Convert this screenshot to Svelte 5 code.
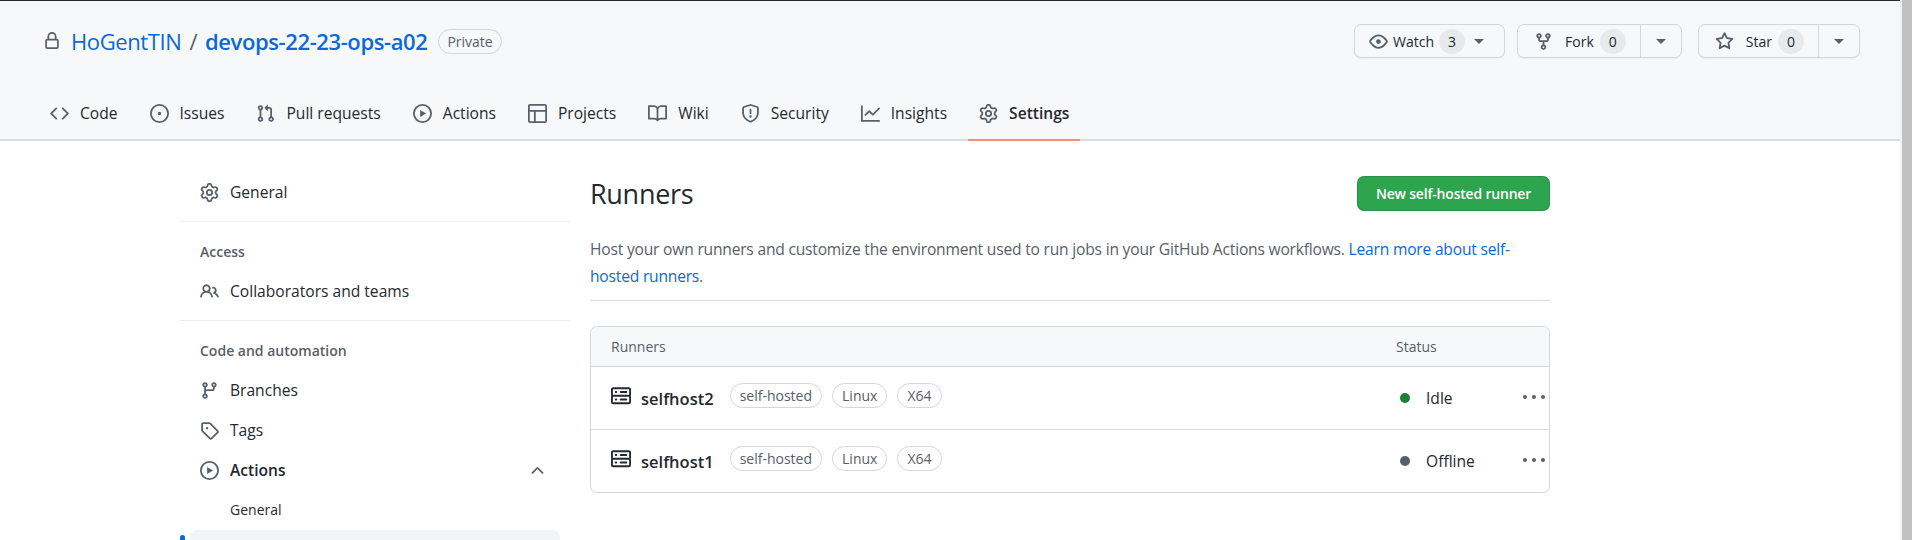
<script>
	const P = {
		lock: 'M4 4a4 4 0 0 1 8 0v2h.25c.966 0 1.75.784 1.75 1.75v5.5A1.75 1.75 0 0 1 12.25 15h-8.5A1.75 1.75 0 0 1 2 13.25v-5.5C2 6.784 2.784 6 3.75 6H4Zm8.25 3.5h-8.5a.25.25 0 0 0-.25.25v5.5c0 .138.112.25.25.25h8.5a.25.25 0 0 0 .25-.25v-5.5a.25.25 0 0 0-.25-.25ZM10.5 6V4a2.5 2.5 0 1 0-5 0v2Z',
		code: 'm11.28 3.22 4.25 4.25a.75.75 0 0 1 0 1.06l-4.25 4.25a.749.749 0 0 1-1.275-.326.749.749 0 0 1 .215-.734L13.94 8l-3.72-3.72a.749.749 0 0 1 .326-1.275.749.749 0 0 1 .734.215Zm-6.56 0a.751.751 0 0 1 1.042.018.751.751 0 0 1 .018 1.042L2.06 8l3.72 3.72a.749.749 0 0 1-.326 1.275.749.749 0 0 1-.734-.215L.47 8.53a.75.75 0 0 1 0-1.06Z',
		issue: 'M8 9.5a1.5 1.5 0 1 0 0-3 1.5 1.5 0 0 0 0 3ZM8 0a8 8 0 1 1 0 16A8 8 0 0 1 8 0ZM1.5 8a6.5 6.5 0 1 0 13 0 6.5 6.5 0 0 0-13 0Z',
		pull: 'M1.5 3.25a2.25 2.25 0 1 1 3 2.122v5.256a2.251 2.251 0 1 1-1.5 0V5.372A2.25 2.25 0 0 1 1.5 3.25Zm5.677-.177L9.573.677A.25.25 0 0 1 10 .854V2.5h1A2.5 2.5 0 0 1 13.5 5v5.628a2.251 2.251 0 1 1-1.5 0V5a1 1 0 0 0-1-1h-1v1.646a.25.25 0 0 1-.427.177L7.177 3.427a.25.25 0 0 1 0-.354ZM3.75 2.5a.75.75 0 1 0 0 1.5.75.75 0 0 0 0-1.5Zm0 9.5a.75.75 0 1 0 0 1.5.75.75 0 0 0 0-1.5Zm8.25.75a.75.75 0 1 0 1.5 0 .75.75 0 0 0-1.5 0Z',
		play: 'M8 0a8 8 0 1 1 0 16A8 8 0 0 1 8 0ZM1.5 8a6.5 6.5 0 1 0 13 0 6.5 6.5 0 0 0-13 0Zm4.879-2.773 4.264 2.559a.25.25 0 0 1 0 .428l-4.264 2.559A.25.25 0 0 1 6 10.559V5.442a.25.25 0 0 1 .379-.215Z',
		table: 'M0 1.75C0 .784.784 0 1.75 0h12.5C15.216 0 16 .784 16 1.75v12.5A1.75 1.75 0 0 1 14.25 16H1.75A1.75 1.75 0 0 1 0 14.25ZM6.5 6.5v8h7.75a.25.25 0 0 0 .25-.25V6.5Zm8-1.5V1.75a.25.25 0 0 0-.25-.25H1.75a.25.25 0 0 0-.25.25V5Zm-13 1.5v7.75c0 .138.112.25.25.25H5v-8Z',
		book: 'M0 1.75A.75.75 0 0 1 .75 1h4.253c1.227 0 2.317.59 3 1.501A3.743 3.743 0 0 1 11.006 1h4.245a.75.75 0 0 1 .75.75v10.5a.75.75 0 0 1-.75.75h-4.507a2.25 2.25 0 0 0-1.591.659l-.622.621a.75.75 0 0 1-1.06 0l-.622-.621A2.25 2.25 0 0 0 5.258 13H.75a.75.75 0 0 1-.75-.75Zm7.251 10.324.004-5.073-.002-2.253A2.25 2.25 0 0 0 5.003 2.5H1.5v9h3.757a3.75 3.75 0 0 1 1.994.574ZM8.755 4.75l-.004 7.322a3.752 3.752 0 0 1 1.992-.572H14.5v-9h-3.495a2.25 2.25 0 0 0-2.25 2.25Z',
		shield: 'M7.467.133a1.748 1.748 0 0 1 1.066 0l5.25 1.68A1.75 1.75 0 0 1 15 3.48V7c0 1.566-.32 3.182-1.303 4.682-.983 1.498-2.585 2.813-5.032 3.855a1.697 1.697 0 0 1-1.33 0c-2.447-1.042-4.049-2.357-5.032-3.855C1.32 10.182 1 8.566 1 7V3.48a1.75 1.75 0 0 1 1.217-1.667Zm.61 1.429a.25.25 0 0 0-.153 0l-5.25 1.68a.25.25 0 0 0-.174.238V7c0 1.358.275 2.666 1.057 3.86.784 1.194 2.121 2.34 4.366 3.297a.196.196 0 0 0 .154 0c2.245-.956 3.582-2.104 4.366-3.298C13.225 9.666 13.5 8.36 13.5 7V3.48a.251.251 0 0 0-.174-.237l-5.25-1.68ZM8.75 4.75v3a.75.75 0 0 1-1.5 0v-3a.75.75 0 0 1 1.5 0ZM9 10.5a1 1 0 1 1-2 0 1 1 0 0 1 2 0Z',
		graph: 'M1.5 1.75V13.5h13.75a.75.75 0 0 1 0 1.5H.75a.75.75 0 0 1-.75-.75V1.75a.75.75 0 0 1 1.5 0Zm14.28 2.53-5.25 5.25a.75.75 0 0 1-1.06 0L7 7.06 4.28 9.78a.751.751 0 0 1-1.042-.018.751.751 0 0 1-.018-1.042l3.25-3.25a.75.75 0 0 1 1.06 0L10 7.94l4.72-4.72a.751.751 0 0 1 1.042.018.751.751 0 0 1 .018 1.042Z',
		gear: 'M8 0a8.2 8.2 0 0 1 .701.031C9.444.095 9.99.645 10.16 1.29l.288 1.107c.018.066.079.158.212.224.231.114.454.243.668.386.123.082.233.09.299.071l1.103-.303c.644-.176 1.392.021 1.82.63.27.385.506.792.704 1.218.315.675.111 1.422-.364 1.891l-.814.806c-.049.048-.098.147-.088.294.016.257.016.515 0 .772-.01.147.038.246.088.294l.814.806c.475.469.679 1.216.364 1.891a7.977 7.977 0 0 1-.704 1.217c-.428.61-1.176.807-1.82.63l-1.102-.302c-.067-.019-.177-.011-.3.071a5.909 5.909 0 0 1-.668.386c-.133.066-.194.158-.211.224l-.29 1.106c-.168.646-.715 1.196-1.458 1.26a8.006 8.006 0 0 1-1.402 0c-.743-.064-1.289-.614-1.458-1.26l-.289-1.106c-.018-.066-.079-.158-.212-.224a5.738 5.738 0 0 1-.668-.386c-.123-.082-.233-.09-.299-.071l-1.103.303c-.644.176-1.392-.021-1.82-.63a8.12 8.12 0 0 1-.704-1.218c-.315-.675-.111-1.422.363-1.891l.815-.806c.05-.048.098-.147.088-.294a6.214 6.214 0 0 1 0-.772c.01-.147-.038-.246-.088-.294l-.815-.806C.635 6.045.431 5.298.746 4.623a7.92 7.92 0 0 1 .704-1.217c.428-.61 1.176-.807 1.82-.63l1.102.302c.067.019.177.011.3-.071.214-.143.437-.272.668-.386.133-.066.194-.158.211-.224l.29-1.106C6.009.645 6.556.095 7.299.03 7.53.01 7.764 0 8 0Zm-.571 1.525c-.036.003-.108.036-.137.146l-.289 1.105c-.147.561-.549.967-.998 1.189-.173.086-.34.183-.5.29-.417.278-.97.423-1.529.27l-1.103-.303c-.109-.03-.175.016-.195.045-.22.312-.412.644-.573.99-.014.031-.021.11.059.19l.815.806c.411.406.562.957.53 1.456a4.709 4.709 0 0 0 0 .582c.032.499-.119 1.05-.53 1.456l-.815.806c-.081.08-.073.159-.059.19.162.346.353.677.573.989.02.03.085.076.195.046l1.102-.303c.56-.153 1.113-.008 1.53.27.161.107.328.204.501.29.447.222.85.629.997 1.189l.289 1.105c.029.109.101.143.137.146a6.6 6.6 0 0 0 1.142 0c.036-.003.108-.036.137-.146l.289-1.105c.147-.561.549-.967.998-1.189.173-.086.34-.183.5-.29.417-.278.97-.423 1.529-.27l1.103.303c.109.029.175-.016.195-.045.22-.313.411-.644.573-.99.014-.031.021-.11-.059-.19l-.815-.806c-.411-.406-.562-.957-.53-1.456a4.709 4.709 0 0 0 0-.582c-.032-.499.119-1.05.53-1.456l.815-.806c.081-.08.073-.159.059-.19a6.464 6.464 0 0 0-.573-.989c-.02-.03-.085-.076-.195-.046l-1.102.303c-.56.153-1.113.008-1.53-.27a4.44 4.44 0 0 0-.501-.29c-.447-.222-.85-.629-.997-1.189l-.289-1.105c-.029-.11-.101-.143-.137-.146a6.6 6.6 0 0 0-1.142 0ZM11 8a3 3 0 1 1-6 0 3 3 0 0 1 6 0ZM9.5 8a1.5 1.5 0 1 0-3.001.001A1.5 1.5 0 0 0 9.5 8Z',
		eye: 'M8 2c1.981 0 3.671.992 4.933 2.078 1.27 1.091 2.187 2.345 2.637 3.023a1.62 1.62 0 0 1 0 1.798c-.45.678-1.367 1.932-2.637 3.023C11.67 13.008 9.981 14 8 14c-1.981 0-3.671-.992-4.933-2.078C1.797 10.83.88 9.576.43 8.898a1.62 1.62 0 0 1 0-1.798c.45-.677 1.367-1.931 2.637-3.022C4.33 2.992 6.019 2 8 2ZM1.679 7.932a.12.12 0 0 0 0 .136c.411.622 1.241 1.75 2.366 2.717C5.176 11.758 6.527 12.5 8 12.5c1.473 0 2.825-.742 3.955-1.715 1.124-.967 1.954-2.096 2.366-2.717a.12.12 0 0 0 0-.136c-.412-.621-1.242-1.75-2.366-2.717C10.824 4.242 9.473 3.5 8 3.5c-1.473 0-2.825.742-3.955 1.715-1.124.967-1.954 2.096-2.366 2.717ZM8 10a2 2 0 1 1-.001-3.999A2 2 0 0 1 8 10Z',
		fork: 'M5 5.372v.878c0 .414.336.75.75.75h4.5a.75.75 0 0 0 .75-.75v-.878a2.25 2.25 0 1 1 1.5 0v.878a2.25 2.25 0 0 1-2.25 2.25h-1.5v2.128a2.251 2.251 0 1 1-1.5 0V8.5h-1.5A2.25 2.25 0 0 1 3.5 6.25v-.878a2.25 2.25 0 1 1 1.5 0ZM5 3.25a.75.75 0 1 0-1.5 0 .75.75 0 0 0 1.5 0Zm6.75.75a.75.75 0 1 0 0-1.5.75.75 0 0 0 0 1.5Zm-3 8.75a.75.75 0 1 0-1.5 0 .75.75 0 0 0 1.5 0Z',
		star: 'M8 .25a.75.75 0 0 1 .673.418l1.882 3.815 4.21.612a.75.75 0 0 1 .416 1.279l-3.046 2.97.719 4.192a.751.751 0 0 1-1.088.791L8 12.347l-3.766 1.98a.75.75 0 0 1-1.088-.79l.72-4.194L.818 6.374a.75.75 0 0 1 .416-1.28l4.21-.611L7.327.668A.75.75 0 0 1 8 .25Zm0 2.445L6.615 5.5a.75.75 0 0 1-.564.41l-3.097.45 2.24 2.184a.75.75 0 0 1 .216.664l-.528 3.084 2.769-1.456a.75.75 0 0 1 .698 0l2.77 1.456-.53-3.084a.75.75 0 0 1 .216-.664l2.24-2.183-3.096-.45a.75.75 0 0 1-.564-.41L8 2.694Z',
		people: 'M2 5.5a3.5 3.5 0 1 1 5.898 2.549 5.508 5.508 0 0 1 3.034 4.084.75.75 0 1 1-1.482.235 4 4 0 0 0-7.9 0 .75.75 0 0 1-1.482-.236A5.507 5.507 0 0 1 3.102 8.05 3.493 3.493 0 0 1 2 5.5ZM11 4a3.001 3.001 0 0 1 2.22 5.018 5.01 5.01 0 0 1 2.56 3.012.749.749 0 0 1-.885.954.752.752 0 0 1-.549-.514 3.507 3.507 0 0 0-2.522-2.372.75.75 0 0 1-.574-.73v-.352a.75.75 0 0 1 .416-.672A1.5 1.5 0 0 0 11 5.5.75.75 0 0 1 11 4Zm-5.5-.5a2 2 0 1 0-.001 3.999A2 2 0 0 0 5.5 3.5Z',
		branch: 'M9.5 3.25a2.25 2.25 0 1 1 3 2.122V6A2.5 2.5 0 0 1 10 8.5H6a1 1 0 0 0-1 1v1.128a2.251 2.251 0 1 1-1.5 0V5.372a2.25 2.25 0 1 1 1.5 0v1.836A2.493 2.493 0 0 1 6 7h4a1 1 0 0 0 1-1v-.628A2.25 2.25 0 0 1 9.5 3.25Zm-6 0a.75.75 0 1 0 1.5 0 .75.75 0 0 0-1.5 0Zm8.25-.75a.75.75 0 1 0 0 1.5.75.75 0 0 0 0-1.5ZM4.25 12a.75.75 0 1 0 0 1.5.75.75 0 0 0 0-1.5Z',
		tag: 'M1 7.775V2.75C1 1.784 1.784 1 2.75 1h5.025c.464 0 .91.184 1.238.513l6.25 6.25a1.75 1.75 0 0 1 0 2.474l-5.026 5.026a1.75 1.75 0 0 1-2.474 0l-6.25-6.25A1.752 1.752 0 0 1 1 7.775Zm1.5 0c0 .066.026.13.073.177l6.25 6.25a.25.25 0 0 0 .354 0l5.025-5.025a.25.25 0 0 0 0-.354l-6.25-6.25a.25.25 0 0 0-.177-.073H2.75a.25.25 0 0 0-.25.25ZM6 5a1 1 0 1 1 0 2 1 1 0 0 1 0-2Z',
		chevron: 'M3.22 10.53a.75.75 0 0 1 0-1.06l4.25-4.25a.75.75 0 0 1 1.06 0l4.25 4.25a.75.75 0 1 1-1.06 1.06L8 6.81l-3.72 3.72a.75.75 0 0 1-1.06 0Z',
		server: 'M1.75 1h12.5c.966 0 1.75.784 1.75 1.75v4c0 .372-.116.717-.314 1 .198.283.314.628.314 1v4a1.75 1.75 0 0 1-1.75 1.75H1.75A1.75 1.75 0 0 1 0 12.75v-4c0-.372.116-.717.314-1A1.739 1.739 0 0 1 0 6.75v-4C0 1.784.784 1 1.75 1ZM1.5 2.75v4c0 .138.112.25.25.25h12.5a.25.25 0 0 0 .25-.25v-4a.25.25 0 0 0-.25-.25H1.75a.25.25 0 0 0-.25.25Zm.25 5.75a.25.25 0 0 0-.25.25v4c0 .138.112.25.25.25h12.5a.25.25 0 0 0 .25-.25v-4a.25.25 0 0 0-.25-.25ZM7 4.75A.75.75 0 0 1 7.75 4h4.5a.75.75 0 0 1 0 1.5h-4.5A.75.75 0 0 1 7 4.75ZM7.75 10h4.5a.75.75 0 0 1 0 1.5h-4.5a.75.75 0 0 1 0-1.5ZM3 4.75A.75.75 0 0 1 3.75 4h.5a.75.75 0 0 1 0 1.5h-.5A.75.75 0 0 1 3 4.75ZM3.75 10h.5a.75.75 0 0 1 0 1.5h-.5a.75.75 0 0 1 0-1.5Z'
	};

	const tabs = [
		{ label: 'Code', icon: 'code' },
		{ label: 'Issues', icon: 'issue' },
		{ label: 'Pull requests', icon: 'pull' },
		{ label: 'Actions', icon: 'play' },
		{ label: 'Projects', icon: 'table' },
		{ label: 'Wiki', icon: 'book' },
		{ label: 'Security', icon: 'shield' },
		{ label: 'Insights', icon: 'graph' },
		{ label: 'Settings', icon: 'gear', active: true }
	];

	const runners = [
		{ name: 'selfhost2', status: 'Idle', color: '#1a7f37' },
		{ name: 'selfhost1', status: 'Offline', color: '#57606a' }
	];
	const labels = ['self-hosted', 'Linux', 'X64'];
</script>

<div class="page">
	<div class="content">
		<header class="repo-head">
			<div class="title-row">
				<h1 class="title">
					<svg class="icon lock" viewBox="0 0 16 16"><path d={P.lock} /></svg>
					<a href="#owner" class="owner">HoGentTIN</a>
					<span class="slash">/</span>
					<a href="#repo" class="repo">devops-22-23-ops-a02</a>
					<span class="private">Private</span>
				</h1>
				<div class="actions">
					<div class="btn watch">
						<svg class="icon" viewBox="0 0 16 16"><path d={P.eye} /></svg>
						<span>Watch</span>
						<span class="count">3</span>
						<span class="caret"></span>
					</div>
					<div class="btn split">
						<div class="btn-main">
							<svg class="icon" viewBox="0 0 16 16"><path d={P.fork} /></svg>
							<span class="btn-label">Fork</span>
							<span class="count">0</span>
						</div>
						<div class="btn-drop"><span class="caret"></span></div>
					</div>
					<div class="btn split star">
						<div class="btn-main">
							<svg class="icon" viewBox="0 0 16 16"><path d={P.star} /></svg>
							<span class="btn-label">Star</span>
							<span class="count">0</span>
						</div>
						<div class="btn-drop"><span class="caret"></span></div>
					</div>
				</div>
			</div>
			<nav class="tabs">
				{#each tabs as t}
					<a href="#tab" class="tab" class:active={t.active}>
						<svg class="icon" viewBox="0 0 16 16"><path d={P[t.icon]} /></svg>
						<span>{t.label}</span>
					</a>
				{/each}
			</nav>
		</header>

		<div class="layout">
			<aside class="side">
				<a href="#g" class="item"><svg class="icon" viewBox="0 0 16 16"><path d={P.gear} /></svg>General</a>
				<div class="sep"></div>
				<div class="heading">Access</div>
				<a href="#c" class="item"><svg class="icon" viewBox="0 0 16 16"><path d={P.people} /></svg>Collaborators and teams</a>
				<div class="sep"></div>
				<div class="heading">Code and automation</div>
				<a href="#b" class="item"><svg class="icon" viewBox="0 0 16 16"><path d={P.branch} /></svg>Branches</a>
				<a href="#t" class="item"><svg class="icon" viewBox="0 0 16 16"><path d={P.tag} /></svg>Tags</a>
				<a href="#a" class="item strong">
					<svg class="icon" viewBox="0 0 16 16"><path d={P.play} /></svg>Actions
					<svg class="icon chev" viewBox="0 0 16 16"><path d={P.chevron} /></svg>
				</a>
				<a href="#ag" class="sub">General</a>
				<div class="sub current"><span class="mark"></span></div>
			</aside>

			<main class="main">
				<div class="main-head">
					<h2>Runners</h2>
					<button class="primary">New self-hosted runner</button>
				</div>
				<p class="desc">
					Host your own runners and customize the environment used to run jobs in your GitHub Actions workflows. <a href="#l">Learn more about self-hosted runners</a>.
				</p>
				<div class="box">
					<div class="box-head">
						<span class="col-name">Runners</span>
						<span class="col-status">Status</span>
					</div>
					{#each runners as r}
						<div class="row">
							<div class="col-name runner">
								<svg class="icon server" viewBox="0 0 16 16"><path d={P.server} /></svg>
								<span class="name">{r.name}</span>
								<span class="pills">
									{#each labels as l}
										<span class="pill">{l}</span>
									{/each}
								</span>
							</div>
							<div class="col-status state">
								<span class="dot" style="background:{r.color}"></span>
								<span>{r.status}</span>
							</div>
							<div class="more"><i></i><i></i><i></i></div>
						</div>
					{/each}
				</div>
			</main>
		</div>
	</div>
	<div class="scrollbar"><div class="thumb"></div></div>
</div>

<style>
	:global(body) {
		margin: 0;
		overflow: hidden;
		background: #fff;
	}
	.page {
		display: flex;
		height: 540px;
		overflow: hidden;
		font-family: "Open Sans", sans-serif;
		font-size: 15.6px;
		color: #24292f;
	}
	.content {
		flex: 1;
		min-width: 0;
	}
	a {
		color: inherit;
		text-decoration: none;
	}
	.icon {
		width: 19px;
		height: 19px;
		fill: #57606a;
		flex: none;
	}

	.repo-head {
		height: 139px;
		background: #f6f8fa;
		border-top: 1px solid #24292f;
		border-bottom: 2px solid #d8dee4;
		box-sizing: content-box;
		margin-top: 0;
		height: 138px;
		display: flex;
		flex-direction: column;
		justify-content: space-between;
	}
	.title-row {
		display: flex;
		justify-content: space-between;
		padding: 23px 40px 0 43px;
	}
	.title {
		display: flex;
		align-items: center;
		margin: 0;
		height: 34px;
		font-size: 22px;
		font-weight: 400;
		letter-spacing: -0.4px;
	}
	.lock {
		width: 18px;
		height: 18px;
		margin-right: 10px;
	}
	.owner,
	.repo {
		color: #0969da;
	}
	.repo {
		font-weight: 600;
	}
	.slash {
		margin: 0 8px;
		color: #57606a;
	}
	.private {
		margin-left: 11px;
		padding: 0 8px;
		height: 23px;
		line-height: 23px;
		border: 1px solid #d0d7de;
		border-radius: 13px;
		font-size: 14px;
		font-weight: 500;
		letter-spacing: 0;
		color: #57606a;
	}
	.actions {
		display: flex;
		gap: 12px;
	}
	.btn {
		display: flex;
		align-items: center;
		height: 32px;
		border: 1px solid #d0d7de;
		border-radius: 7px;
		background: #f6f8fa;
		font-size: 14px;
		font-weight: 500;
		box-shadow: 0 1px 0 rgba(27, 31, 36, 0.04);
	}
	.watch {
		width: 147px;
		padding-left: 14px;
		gap: 5px;
		box-sizing: content-box;
		width: 135px;
	}
	.star {
		margin-left: 4px;
	}
	.btn-main {
		display: flex;
		align-items: center;
		height: 100%;
		padding: 0 14px 0 16px;
		border-right: 1px solid #d0d7de;
	}
	.btn-label {
		margin: 0 6px 0 12px;
	}
	.btn-drop {
		display: flex;
		justify-content: center;
		width: 40px;
	}
	.count {
		display: inline-block;
		width: 26px;
		height: 25px;
		line-height: 25px;
		text-align: center;
		border-radius: 13px;
		background: #e7e9eb;
	}
	.caret {
		width: 0;
		height: 0;
		border: 5px solid transparent;
		border-top-color: #57606a;
		border-bottom: 0;
	}
	.watch .caret {
		margin-left: 4px;
	}

	.tabs {
		display: flex;
		gap: 10px;
		padding-left: 39px;
		margin-bottom: -2px;
	}
	.tab {
		display: flex;
		align-items: center;
		gap: 11px;
		height: 54px;
		padding: 0 11px;
		box-sizing: border-box;
		border-bottom: 2px solid transparent;
	}
	.tab.active {
		font-weight: 600;
		border-bottom-color: #fd8c73;
	}

	.layout {
		display: flex;
		padding-left: 180px;
		width: 1370px;
		gap: 20px;
	}
	.side {
		width: 390px;
		flex: none;
		padding-top: 31px;
	}
	.item {
		display: flex;
		align-items: center;
		gap: 11px;
		height: 40px;
		padding-left: 20px;
	}
	.strong {
		font-weight: 600;
	}
	.chev {
		margin-left: auto;
		margin-right: 23px;
	}
	.sep {
		height: 1px;
		margin: 9px 0;
		background: #eaeef2;
	}
	.heading {
		padding-left: 20px;
		height: 40px;
		line-height: 42px;
		font-size: 14px;
		font-weight: 600;
		color: #57606a;
	}
	.sub {
		height: 40px;
		line-height: 40px;
		padding-left: 50px;
		font-size: 14px;
	}
	.current {
		position: relative;
		margin: 0 10px;
		padding: 0;
		background: #f3f4f6;
		border-radius: 7px;
	}
	.mark {
		position: absolute;
		left: -10px;
		top: 5px;
		width: 5px;
		height: 28px;
		border-radius: 3px;
		background: #0969da;
	}

	.main {
		flex: 1;
		min-width: 0;
		padding-top: 35px;
	}
	.main-head {
		display: flex;
		justify-content: space-between;
		align-items: center;
		height: 35px;
	}
	h2 {
		margin: 0;
		font-size: 27px;
		font-weight: 400;
		letter-spacing: -0.3px;
	}
	.primary {
		height: 35px;
		width: 193px;
		border: 1px solid rgba(27, 31, 36, 0.15);
		border-radius: 7px;
		background: #2da44e;
		color: #fff;
		font: 600 14px "Open Sans", sans-serif;
		letter-spacing: -0.2px;
	}
	.desc {
		margin: 25px 0 0;
		padding-bottom: 10px;
		line-height: 27px;
		color: #57606a;
		border-bottom: 1px solid #d8dee4;
		letter-spacing: -0.2px;
	}
	.desc a {
		color: #0969da;
	}
	.box {
		margin-top: 25px;
		border: 1px solid #d0d7de;
		border-radius: 7px;
	}
	.box-head {
		display: flex;
		align-items: center;
		height: 39px;
		background: #f6f8fa;
		border-bottom: 1px solid #d0d7de;
		border-radius: 7px 7px 0 0;
		font-size: 14px;
		color: #57606a;
	}
	.col-name {
		width: 785px;
		padding-left: 20px;
		box-sizing: content-box;
	}
	.col-status {
		width: 100px;
	}
	.row {
		display: flex;
		align-items: center;
		height: 62px;
	}
	.row + .row {
		border-top: 1px solid #d8dee4;
	}
	.runner {
		display: flex;
		align-items: center;
		gap: 10px;
	}
	.server {
		width: 20px;
		height: 20px;
		fill: #24292f;
		margin-top: -4px;
	}
	.name {
		font-size: 16.5px;
		font-weight: 600;
	}
	.pills {
		display: flex;
		gap: 10px;
		margin: -5px 0 0 6px;
	}
	.pill {
		padding: 0 9px;
		height: 23px;
		line-height: 23px;
		border: 1px solid #d0d7de;
		border-radius: 13px;
		font-size: 14px;
		font-weight: 500;
		color: #57606a;
	}
	.state {
		display: flex;
		align-items: center;
		gap: 16px;
		padding-left: 4px;
		box-sizing: border-box;
	}
	.dot {
		width: 10px;
		height: 10px;
		border-radius: 50%;
	}
	.more {
		display: flex;
		gap: 5px;
		margin-left: 27px;
		margin-top: -2px;
	}
	.more i {
		width: 4px;
		height: 4px;
		border-radius: 50%;
		background: #57606a;
	}

	.scrollbar {
		width: 12px;
		flex: none;
		background: #f1f1f1;
	}
	.thumb {
		height: 100%;
		margin-left: 2px;
		background: #c1c1c1;
	}
</style>
